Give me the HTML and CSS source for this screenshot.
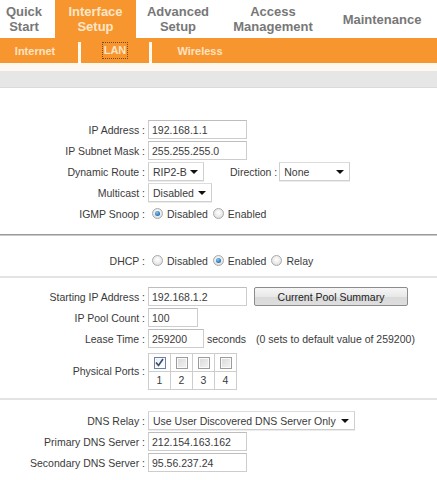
FILE: index.html
```html
<!DOCTYPE html>
<html>
<head>
<meta charset="utf-8">
<link rel="stylesheet" href="styles.css">
</head>
<body>
<div class="tabs">
  <div class="tab t-quick">Quick<br>Start</div>
  <div class="tab t-iface active">Interface<br>Setup</div>
  <div class="tab t-adv">Advanced<br>Setup</div>
  <div class="tab t-access">Access<br>Management</div>
  <div class="tab t-maint">Maintenance</div>
</div>
<div class="subnav">
  <div class="sub s-internet">Internet</div>
  <div class="sub-sep"></div>
  <div class="sub s-lan"><span class="focus">LAN</span></div>
  <div class="sub-sep"></div>
  <div class="sub s-wireless">Wireless</div>
</div>
<div class="cream"></div>
<div class="grayband"></div>

<div class="form">
  <div class="section sec-lan">
    <div class="row"><div class="lbl">IP Address :</div><input class="field w99" value="192.168.1.1"></div>
    <div class="row"><div class="lbl">IP Subnet Mask :</div><input class="field w99" value="255.255.255.0"></div>
    <div class="row">
      <div class="lbl">Dynamic Route :</div>
      <div class="select w56"><span class="sel-text">RIP2-B</span><span class="arrow"></span></div>
      <div class="inline-lbl">Direction :</div>
      <div class="select w71"><span class="sel-text">None</span><span class="arrow"></span></div>
    </div>
    <div class="row"><div class="lbl">Multicast :</div><div class="select w64"><span class="sel-text">Disabled</span><span class="arrow"></span></div></div>
    <div class="row">
      <div class="lbl">IGMP Snoop :</div>
      <div class="radios">
        <span class="radio on"></span><span class="rtext">Disabled</span>
        <span class="radio"></span><span class="rtext">Enabled</span>
      </div>
    </div>
  </div>

  <div class="sep thick"></div>

  <div class="section sec-dhcp">
    <div class="row">
      <div class="lbl">DHCP :</div>
      <div class="radios">
        <span class="radio"></span><span class="rtext">Disabled</span>
        <span class="radio on"></span><span class="rtext">Enabled</span>
        <span class="radio"></span><span class="rtext">Relay</span>
      </div>
    </div>
  </div>

  <div class="sep light s2"></div>

  <div class="section sec-pool">
    <div class="row"><div class="lbl">Starting IP Address :</div><input class="field w99" value="192.168.1.2"><div class="btn">Current Pool Summary</div></div>
    <div class="row"><div class="lbl">IP Pool Count :</div><input class="field w50" value="100"></div>
    <div class="row"><div class="lbl">Lease Time :</div><input class="field w56" value="259200"><span class="after">seconds</span><span class="note">(0 sets to default value of 259200)</span></div>
    <div class="row ports-row">
      <div class="lbl">Physical Ports :</div>
      <table class="ports">
        <tr><td><span class="cb on"><svg width="9" height="9" viewBox="0 0 9 9"><path d="M1 4.5 L3.5 7.5 L8 1" fill="none" stroke="#3a4a6a" stroke-width="1.6"/></svg></span></td><td><span class="cb"></span></td><td><span class="cb"></span></td><td><span class="cb"></span></td></tr>
        <tr><td>1</td><td>2</td><td>3</td><td>4</td></tr>
      </table>
    </div>
  </div>

  <div class="sep light s3"></div>

  <div class="section sec-dns">
    <div class="row"><div class="lbl">DNS Relay :</div><div class="select w207"><span class="sel-text">Use User Discovered DNS Server Only</span><span class="arrow"></span></div></div>
    <div class="row"><div class="lbl">Primary DNS Server :</div><input class="field w99" value="212.154.163.162"></div>
    <div class="row"><div class="lbl">Secondary DNS Server :</div><input class="field w99" value="95.56.237.24"></div>
  </div>
</div>
</body>
</html>
```

FILE: styles.css
```css
html, body {
  margin: 0;
  padding: 0;
  background: #fff;
}
body {
  width: 437px;
  font-family: "Liberation Sans", Arial, sans-serif;
  font-size: 10.5px;
  color: #3a3a3a;
  overflow: hidden;
}

/* top tabs */
.tabs {
  display: flex;
  height: 38px;
  background: #fff;
}
.tab {
  display: flex;
  align-items: center;
  justify-content: center;
  text-align: center;
  font-size: 13px;
  font-weight: bold;
  line-height: 15px;
  color: #777;
  box-sizing: border-box;
}
.t-quick { width: 55px; padding-right: 7px; }
.t-iface { width: 81px; }
.t-adv { width: 84px; }
.t-access { width: 104px; padding-left: 2px; }
.t-maint { width: 113px; padding-left: 3px; }
.tab.active {
  background: #f7962f;
  color: #fde6c8;
}

/* sub navigation */
.subnav {
  display: flex;
  height: 25px;
  background: #f7962f;
}
.sub {
  display: flex;
  align-items: center;
  justify-content: center;
  font-size: 11px;
  font-weight: bold;
  color: #fde3c3;
}
.s-internet { width: 70px; padding-right: 8px; }
.s-lan { width: 68px; }
.s-wireless { width: 96px; }
.sub-sep {
  width: 3px;
  margin-top: 4px;
  background: #fffaf0;
}
.focus {
  border: 1px dotted #7a4a10;
  padding: 1px 1px;
  line-height: 13px;
  color: #fde3c3;
}
.cream {
  height: 8px;
  background: #fdf9f1;
}
.grayband {
  height: 16px;
  background: #e6e6e6;
  border-bottom: 1px solid #dadada;
}

/* form */
.form {
  padding-top: 31px;
}
.row {
  display: flex;
  align-items: center;
  height: 21px;
}
.lbl {
  width: 145px;
  flex: none;
  text-align: right;
  padding-right: 3px;
  box-sizing: content-box;
  white-space: nowrap;
}
.field {
  box-sizing: border-box;
  height: 19px;
  margin: 0;
  padding: 0 0 0 3px;
  border: 1px solid #cdcdcd;
  border-top-color: #bdbdbd;
  font-family: "Liberation Sans", Arial, sans-serif;
  font-size: 10.5px;
  color: #3a3a3a;
  background: #fff;
  outline: none;
}
.w99 { width: 99px; }
.w50 { width: 50px; }
.w56 { width: 56px; }
.w64 { width: 64px; }
.w71 { width: 71px; }
.w207 { width: 207px; }

.select {
  display: flex;
  align-items: center;
  box-sizing: border-box;
  height: 19px;
  padding: 0 5px 0 4px;
  border: 1px solid #cfcfcf;
  border-top-color: #dcdcdc;
  box-shadow: 0 1px 0 #ececec;
  background: #fff;
  white-space: nowrap;
}
.sel-text { flex: 1; overflow: hidden; }
.arrow {
  flex: none;
  width: 0;
  height: 0;
  border-left: 4px solid transparent;
  border-right: 4px solid transparent;
  border-top: 4px solid #111;
}
.inline-lbl {
  margin-left: 26px;
  margin-right: 2px;
}

/* radios */
.radios {
  display: flex;
  align-items: center;
  padding-left: 4px;
}
.radio {
  width: 11px;
  height: 11px;
  border-radius: 50%;
  box-sizing: border-box;
  border: 1px solid #a9a9a9;
  background: radial-gradient(circle at 50% 40%, #ffffff 0%, #eaeaea 55%, #d2d2d2 100%);
  display: flex;
  align-items: center;
  justify-content: center;
}
.radio.on::before {
  content: "";
  width: 5px;
  height: 5px;
  border-radius: 50%;
  background: radial-gradient(circle at 40% 35%, #8ccaf2 0%, #2b7bc0 60%, #1c4f86 100%);
}
.rtext {
  margin-left: 4px;
  margin-right: 5px;
}

/* separators */
.sep { margin: 0; }
.sep.thick {
  margin-top: 10px;
  height: 1px;
  background: #9a9a9a;
  border-bottom: 1px solid #c9c9c9;
  margin-bottom: 14px;
}
.sep.light {
  height: 2px;
  background: #e3e3e3;
}
.s2 { margin-top: 5px; margin-bottom: 8px; }
.s3 { margin-top: 9px; margin-bottom: 10px; }

/* button */
.btn {
  margin-left: 7px;
  width: 154px;
  height: 19px;
  box-sizing: border-box;
  border: 1px solid #8c8c8c;
  border-radius: 2px;
  background: linear-gradient(#f6f6f6, #e8e8e8 50%, #d9d9d9 51%, #dedede);
  display: flex;
  align-items: center;
  justify-content: center;
  color: #222;
}
.after { margin-left: 3px; }
.note { margin-left: 10px; white-space: nowrap; }

/* ports */
.ports-row {
  height: 36px;
  margin-top: 4px;
}
.ports {
  border-collapse: collapse;
  border: 1px solid #c4c4c4;
}
.ports td {
  width: 21px;
  height: 17px;
  padding: 0;
  border: 1px solid #cdcdcd;
  text-align: center;
  vertical-align: middle;
  font-size: 10.5px;
  line-height: 12px;
}
.cb {
  display: inline-flex;
  align-items: center;
  justify-content: center;
  width: 12px;
  height: 12px;
  box-sizing: border-box;
  border: 1px solid #9c9c9c;
  background: linear-gradient(135deg, #d9d9d9, #f4f4f4);
  box-shadow: inset 0 0 0 1px #fafafa;
  vertical-align: middle;
}
.cb.on {
  border-color: #6d7fa6;
  background: linear-gradient(135deg, #e8ecf4, #ffffff);
}
```
